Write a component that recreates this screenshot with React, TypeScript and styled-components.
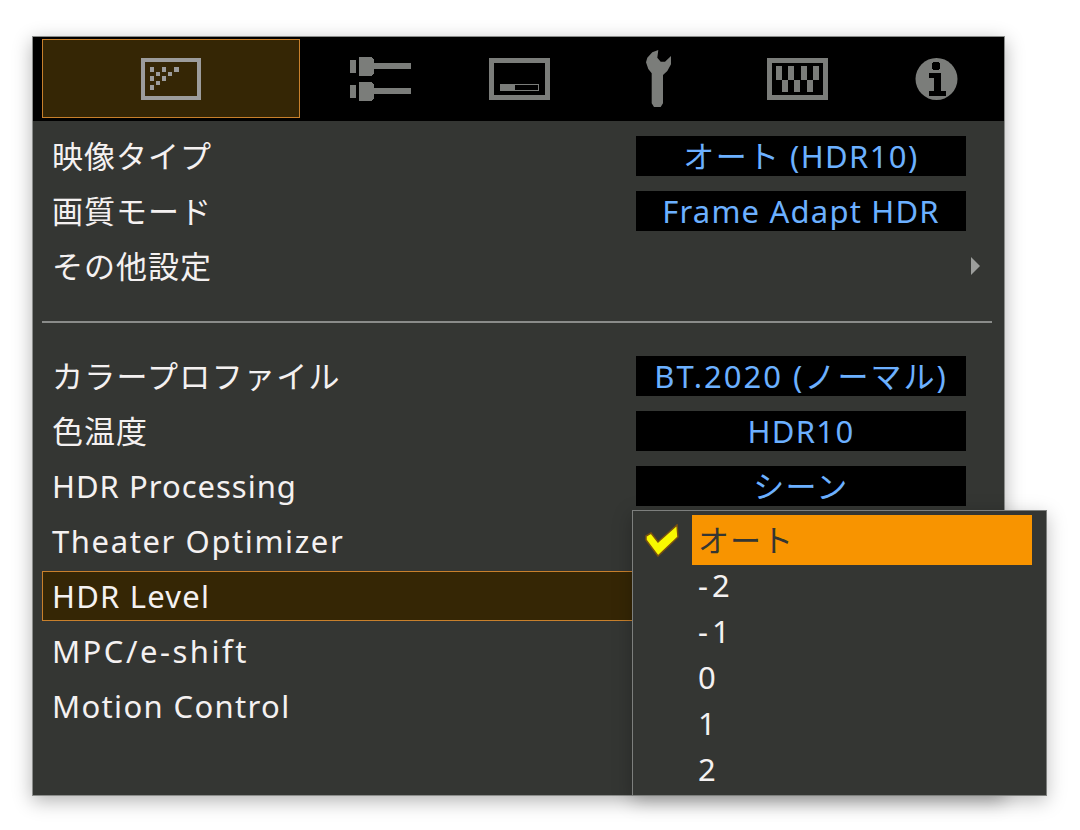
import { JSX } from 'react'
import styled, { createGlobalStyle } from 'styled-components'

const GlobalStyle = createGlobalStyle`
	html, body {
		margin: 0;
		padding: 0;
		background: #fff;
	}
	body {
		font-family: 'Noto Sans', 'Noto Sans CJK JP', sans-serif;
	}
`
const Page = styled.div`
	box-sizing: border-box;
	width: 1080px;
	height: 830px;
	padding: 36px 0 0 32px;
	overflow: hidden;
`
const Panel = styled.div`
	position: relative;
	box-sizing: border-box;
	width: 973px;
	height: 760px;
	background-color: #343633;
	border: 1px solid #8b8d8b;
	box-shadow: 0 5px 18px rgba(0, 0, 0, 0.3);
`
const Header = styled.div`
	display: flex;
	align-items: center;
	height: 84px;
	padding: 2px 0 3px 9px;
	box-sizing: border-box;
	background-color: #000;
`
const Tab = styled.div<{ $active?: boolean }>`
	display: flex;
	flex: none;
	align-items: center;
	justify-content: center;
	box-sizing: border-box;
	height: 79px;
	width: ${p => (p.$active ? '258px' : '139px')};
	margin-right: ${p => (p.$active ? '11px' : '0')};
	background-color: ${p => (p.$active ? '#352605' : 'transparent')};
	border: ${p => (p.$active ? '1px solid #c8802c' : 'none')};
	color: ${p => (p.$active ? '#9c9c9c' : '#7b7d7a')};
`
const List = styled.div`
	display: flex;
	flex-direction: column;
	gap: 5px;
	padding: 10px 12px 0 9px;
`
const Row = styled.div<{ $active?: boolean }>`
	display: flex;
	align-items: center;
	justify-content: space-between;
	box-sizing: border-box;
	height: 50px;
	padding: 0 26px 0 10px;
	background-color: ${p => (p.$active ? '#352605' : 'transparent')};
	outline: ${p => (p.$active ? '1px solid #c8802c' : 'none')};
	outline-offset: -1px;
`
const Label = styled.span<{ $spacing: number }>`
	font-size: 31px;
	letter-spacing: ${p => p.$spacing}px;
	line-height: 40px;
	color: #f4f1f1;
	white-space: nowrap;
`
const Value = styled.span<{ $spacing: number }>`
	display: block;
	width: 330px;
	height: 40px;
	background-color: #000;
	color: #6cb0ff;
	font-size: 31px;
	letter-spacing: ${p => p.$spacing}px;
	line-height: 40px;
	text-align: center;
	white-space: nowrap;
`
const Arrow = styled.span`
	width: 0;
	height: 0;
	margin-right: -14px;
	border-left: 9px solid #9c9e9c;
	border-top: 9px solid transparent;
	border-bottom: 9px solid transparent;
`
const Divider = styled.div`
	height: 2px;
	margin: 25px 0 23px 0;
	background-color: #8a8c8a;
`
const Dropdown = styled.div`
	position: absolute;
	left: 599px;
	top: 473px;
	box-sizing: border-box;
	width: 415px;
	height: 286px;
	padding: 4px 14px 0 59px;
	background-color: #343633;
	border: 1px solid #7d7f7d;
	box-shadow: 0 5px 18px rgba(0, 0, 0, 0.25);
`
const Option = styled.div<{ $active?: boolean; $spacing?: number }>`
	position: relative;
	box-sizing: border-box;
	height: ${p => (p.$active ? '50px' : '46px')};
	padding-left: 6px;
	font-size: 31px;
	letter-spacing: ${p => p.$spacing ?? 1}px;
	line-height: ${p => (p.$active ? '50px' : '40px')};
	background-color: ${p => (p.$active ? '#f89400' : 'transparent')};
	color: ${p => (p.$active ? '#343633' : '#f4f1f1')};
`
const CheckMark = styled.svg`
	position: absolute;
	left: -47px;
	top: 9px;
`

function PictureIcon(): JSX.Element {
	const dots = [
		[9, 9, 4, 5], [21, 9, 4, 5], [33, 9, 5, 5], [15, 14, 4, 4], [27, 14, 4, 4],
		[9, 18, 4, 5], [21, 18, 4, 5], [15, 23, 4, 4], [9, 27, 4, 5],
	]
	return (
		<svg width='60' height='42' viewBox='0 0 60 42' fill='currentColor' shapeRendering='crispEdges'>
			<path fillRule='evenodd' d='M0 0h60v42H0zM4 4v34h52V4z' />
			{dots.map(([x, y, w, h]) => (
				<rect key={`${x}-${y}`} x={x} y={y} width={w} height={h} />
			))}
		</svg>
	)
}

function SlidersIcon(): JSX.Element {
	return (
		<svg width='61' height='44' viewBox='0 0 61 44' fill='currentColor' shapeRendering='crispEdges'>
			<rect x='0' y='3' width='6' height='13' />
			<path d='M9 0h12l3 3v3h37v6H24v4l-3 3H9z' />
			<rect x='0' y='28' width='6' height='13' />
			<path d='M9 25h12l3 3v3h37v6H24v4l-3 3H9z' />
		</svg>
	)
}

function ScreenIcon(): JSX.Element {
	return (
		<svg width='61' height='42' viewBox='0 0 61 42' fill='currentColor' shapeRendering='crispEdges'>
			<path fillRule='evenodd' d='M0 0h61v42H0zM5 5v32h51V5z' />
			<path fillRule='evenodd' d='M11 26h39v7H11zM26 27v5h23v-5z' />
		</svg>
	)
}

function WrenchIcon(): JSX.Element {
	return (
		<svg width='25' height='57' viewBox='0 0 25 57' fill='currentColor'>
			<path d='M12.3 0 6.3 2.3 1.3 7.7 0 12.3 2.3 19 5.7 23.3V53.3L8 57H14.7L17 53.3V25L21.3 21 25 14.3V6L19 11.7H14.7L11.3 7.7Z' />
		</svg>
	)
}

function PatternIcon(): JSX.Element {
	return (
		<svg width='61' height='42' viewBox='0 0 61 42' fill='currentColor' shapeRendering='crispEdges'>
			<path fillRule='evenodd' d='M0 0h61v42H0zM5 5v32h51V5z' />
			{[9, 21, 34, 46].map(x => (
				<rect key={x} x={x} y='8' width='6' height='14' />
			))}
			{[15, 27, 40].map(x => (
				<rect key={x} x={x} y='22' width='6' height='12' />
			))}
		</svg>
	)
}

function InfoIcon(): JSX.Element {
	return (
		<svg width='43' height='42' viewBox='0 0 43 42'>
			<circle cx='21.5' cy='21' r='21' fill='currentColor' />
			<g fill='#000' shapeRendering='crispEdges'>
				<ellipse cx='21' cy='8' rx='4.5' ry='4.5' />
				<path d='M14 15h12v18h5v5H14v-5h5V20h-5z' />
			</g>
		</svg>
	)
}

const topRows = [
	{ label: '映像タイプ', value: 'オート (HDR10)', valueSpacing: 1.4 },
	{ label: '画質モード', value: 'Frame Adapt HDR', valueSpacing: 1.2 },
]
const bottomRows = [
	{ label: 'カラープロファイル', spacing: 1.3, value: 'BT.2020 (ノーマル)', valueSpacing: 2 },
	{ label: '色温度', spacing: 1, value: 'HDR10', valueSpacing: 1.3 },
	{ label: 'HDR Processing', spacing: 1, value: 'シーン', valueSpacing: 1.3 },
	{ label: 'Theater Optimizer', spacing: 1.6 },
	{ label: 'HDR Level', spacing: 1.2, active: true },
	{ label: 'MPC/e-shift', spacing: 2.5 },
	{ label: 'Motion Control', spacing: 1.35 },
]
const options = [
	{ text: '-2', spacing: 4 },
	{ text: '-1', spacing: 4 },
	{ text: '0' },
	{ text: '1' },
	{ text: '2' },
]

export default function App(): JSX.Element {
	return (
		<Page>
			<GlobalStyle />
			<Panel>
				<Header>
					<Tab $active><PictureIcon /></Tab>
					<Tab><SlidersIcon /></Tab>
					<Tab><ScreenIcon /></Tab>
					<Tab><WrenchIcon /></Tab>
					<Tab><PatternIcon /></Tab>
					<Tab><InfoIcon /></Tab>
				</Header>
				<List>
					{topRows.map(r => (
						<Row key={r.label}>
							<Label $spacing={1}>{r.label}</Label>
							<Value $spacing={r.valueSpacing}>{r.value}</Value>
						</Row>
					))}
					<Row>
						<Label $spacing={1}>その他設定</Label>
						<Arrow />
					</Row>
					<Divider />
					{bottomRows.map(r => (
						<Row key={r.label} $active={r.active}>
							<Label $spacing={r.spacing}>{r.label}</Label>
							{r.value && <Value $spacing={r.valueSpacing ?? 1}>{r.value}</Value>}
						</Row>
					))}
				</List>
				<Dropdown>
					<Option $active>
						<CheckMark width='34' height='33' viewBox='0 0 34 33'>
							<path
								d='M1 12 6 9 13 18 32 1 33 13 13 32 1 16Z'
								fill='#f8f800'
								stroke='#7a5010'
								strokeWidth='1.5'
							/>
						</CheckMark>
						オート
					</Option>
					{options.map(o => (
						<Option key={o.text} $spacing={o.spacing}>{o.text}</Option>
					))}
				</Dropdown>
			</Panel>
		</Page>
	)
}
